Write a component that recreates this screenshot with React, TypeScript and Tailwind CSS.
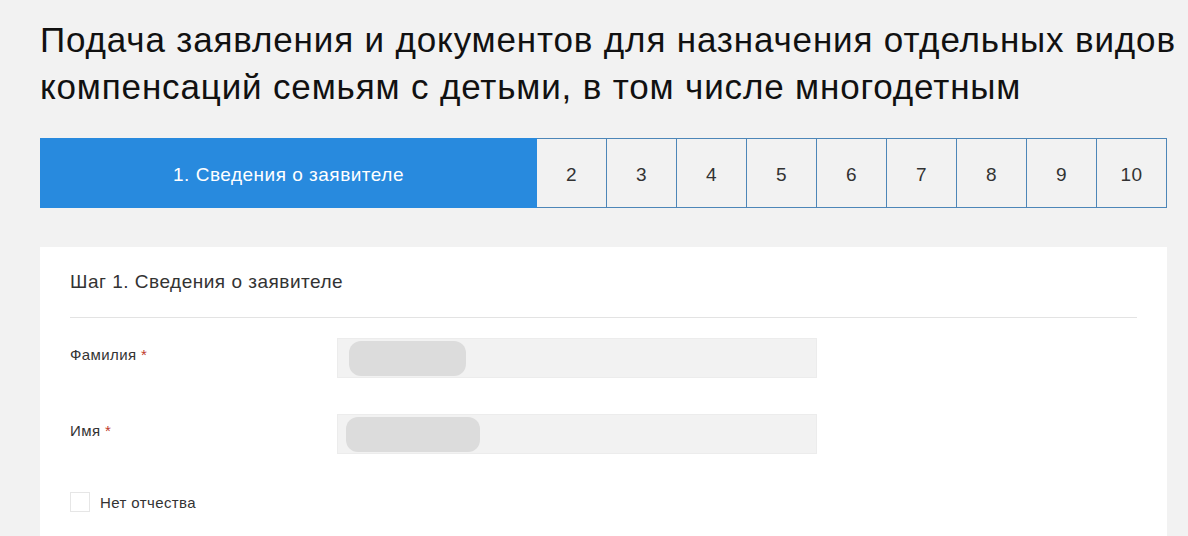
const steps = [2, 3, 4, 5, 6, 7, 8, 9, 10];

const Field = ({ label, pill }: { label: string; pill: string }) => (
    <div className="flex items-start">
        <div className="w-[267px] pt-[7px] text-[15px] leading-[20px] tracking-[0.4px] text-[#333]">
            {label} <span className="text-[#c0392b]">*</span>
        </div>
        <div className="w-[480px] h-[40px] bg-[#f2f2f2] border border-[#ececec] flex items-center px-[8px]">
            <div className={`${pill} h-[35px] rounded-[12px] bg-[#dcdcdc]`} />
        </div>
    </div>
);

const App = () => {
    return (
        <div className="min-h-screen w-full bg-[#f2f2f2] font-['Liberation_Sans',Arial,sans-serif] px-[40px] pt-[16px]">
            <h1 className="w-[1148px] text-[35px] leading-[47px] text-[#111] tracking-[0.85px]">
                Подача заявления и документов для назначения отдельных видов компенсаций семьям с детьми, в том числе многодетным
            </h1>

            <div className="mt-[28px] flex h-[70px] w-[1127px]">
                <div className="w-[497px] pt-[5px] bg-[#288ade] flex items-center justify-center text-white text-[19px] tracking-[0.5px]">
                    1. Сведения о заявителе
                </div>
                {steps.map((n) => (
                    <div
                        key={n}
                        className="w-[70px] pt-[5px] border border-l-0 first:border-l border-[#4d86b8] flex items-center justify-center text-[19px] tracking-[0.5px] text-[#333]"
                    >
                        {n}
                    </div>
                ))}
            </div>

            <div className="mt-[39px] w-[1127px] bg-white px-[30px] pt-[22px] pb-[30px]">
                <div className="text-[19px] leading-[26px] tracking-[0.5px] text-[#333] pb-[22px] border-b border-[#e3e3e3]">
                    Шаг 1. Сведения о заявителе
                </div>
                <div className="pt-[20px] flex flex-col gap-[36px]">
                    <Field label="Фамилия" pill="w-[117px] ml-[3px]" />
                    <Field label="Имя" pill="w-[134px]" />
                    <label className="flex items-center gap-[10px] text-[15px] tracking-[0.4px] text-[#333]">
                        <span className="w-[20px] h-[20px] border border-[#e6e6e6] bg-white" />
                        <span className="pt-[2px]">Нет отчества</span>
                    </label>
                </div>
            </div>
        </div>
    );
};

export default App;
